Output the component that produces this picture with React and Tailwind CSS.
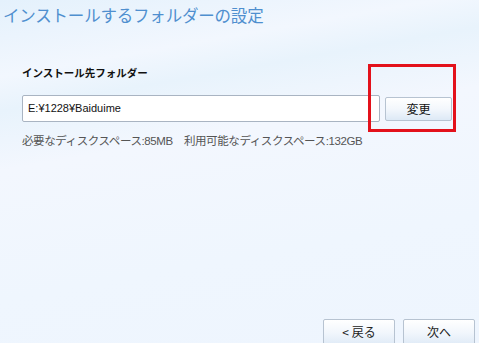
export default function App() {
  const jp = { fontFamily: '"Noto Sans CJK JP", "Noto Sans", sans-serif' };
  const mix = { fontFamily: '"Liberation Sans", "Noto Sans CJK JP", sans-serif' };
  return (
    <div
      className="relative w-[479px] h-[343px] overflow-hidden flex flex-col bg-[#eff6fe] bg-[linear-gradient(170deg,#e4f1fc_0%,#f2f7fe_18%,#e8f3fc_26%,#f3f7fe_40%,#eff6fe_70%,#eef5fe_100%)]"
      style={jp}
    >
      <div className="pl-[3px] pt-[3px] h-[34px] text-[16.5px] leading-[24px] text-[#4f8fcf] tracking-[-0.2px]">
        インストールするフォルダーの設定
      </div>
      <div className="px-[22px] pt-[32px] flex flex-col">
        <div className="text-[10.5px] leading-[14px] font-bold text-[#111] tracking-[0px]">
          インストール先フォルダー
        </div>
        <div className="mt-[15px] flex items-center">
          <div
            className="w-[358px] h-[27px] bg-white border border-[#a9b4c2] rounded-[2px] flex items-center pl-[5px] text-[11px] text-[#111]"
            style={mix}
          >
            E:¥1228¥Baiduime
          </div>
          <button className="ml-[5px] w-[67px] h-[24px] border border-[#b7c3d1] rounded-[2px] bg-[linear-gradient(#ffffff,#f3f7fc_50%,#dde9f6)] text-[12px] text-[#111] flex items-center justify-center">
            変更
          </button>
        </div>
        <div className="mt-[11px] text-[11.5px] leading-[16px] text-[#555] tracking-[-0.4px] whitespace-nowrap" style={mix}>
          必要なディスクスペース:85MB　利用可能なディスクスペース:132GB
        </div>
      </div>
      <div className="mt-auto flex justify-end gap-[8px] pr-[4px] h-[24px]">
        <button className="w-[72px] h-[28px] border border-[#b7c3d1] rounded-[2px] bg-[linear-gradient(#ffffff,#f1f6fc_50%,#dde9f6)] text-[12px] text-[#222] flex items-start justify-center pt-[3px]">
          &lt; 戻る
        </button>
        <button className="w-[72px] h-[28px] border border-[#b7c3d1] rounded-[2px] bg-[linear-gradient(#ffffff,#f1f6fc_50%,#dde9f6)] text-[12px] text-[#222] flex items-start justify-center pt-[3px]">
          次へ
        </button>
      </div>
      <div className="absolute left-[368px] top-[64px] w-[88px] h-[68px] border-[3px] border-[#e3111b]" />
    </div>
  );
}
